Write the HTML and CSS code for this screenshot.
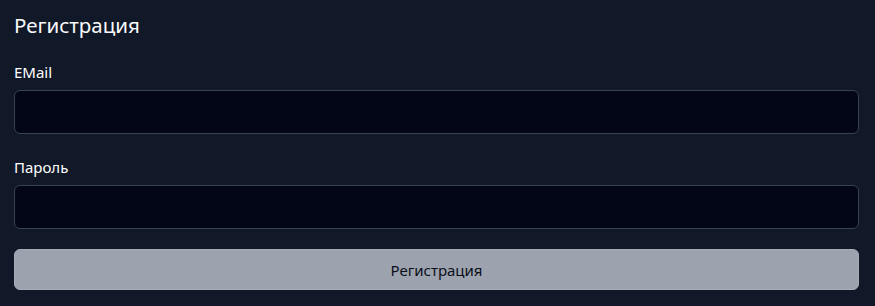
FILE: index.html
```html
<!DOCTYPE html>
<html lang="ru">
<head>
    <meta charset="UTF-8">
    <meta name="viewport" content="width=device-width, initial-scale=1.0">
    <title>Регистрация</title>
    <link rel="stylesheet" href="styles.css">
</head>
<body class="body">
    <div class="page">
        <h1 class="title">Регистрация</h1>

        <form class="form">
            <!-- почта -->
            <div class="field">
                <label class="label" for="email">EMail</label>
                <input class="input" type="email" id="email" name="email">
            </div>

            <!-- пароль -->
            <div class="field">
                <label class="label" for="password">Пароль</label>
                <input class="input" type="password" id="password" name="password">
            </div>

            <button class="submit" type="button">Регистрация</button>
        </form>
    </div>
</body>
</html>
```

FILE: styles.css
```css
html, body {
    margin: 0;
    padding: 0;
    background-color: #111827;
    color: #f3f4f6;
    font-family: "Noto Sans", "Open Sans", sans-serif;
}

.page {
    padding: 10px 16px 0 14px;
}

.title {
    margin: 0;
    font-size: 20.5px;
    font-weight: 400;
    line-height: 30px;
    color: #f9fafb;
}

.form {
    display: flex;
    flex-direction: column;
    margin-top: 22px;
}

.field {
    display: flex;
    flex-direction: column;
    margin-bottom: 23px;
}

/* подписи полей */
.label {
    font-size: 15px;
    line-height: 20px;
    margin-bottom: 8px;
    color: #ffffff;
}

.input {
    box-sizing: border-box;
    height: 44px;
    width: 100%;
    background-color: #020617;
    border: 1px solid #374151;
    border-radius: 6px;
    color: #f3f4f6;
    padding: 0 12px;
    font-size: 15px;
    outline: none;
}

.field:last-of-type {
    margin-bottom: 20px;
}

.submit {
    box-sizing: border-box;
    height: 41px;
    width: 100%;
    background-color: #9ca3af;
    border: 1px solid #a7adb8;
    border-radius: 6px;
    color: #0b0f1a;
    font-family: "Noto Sans", "Open Sans", sans-serif;
    font-size: 15px;
}
```
